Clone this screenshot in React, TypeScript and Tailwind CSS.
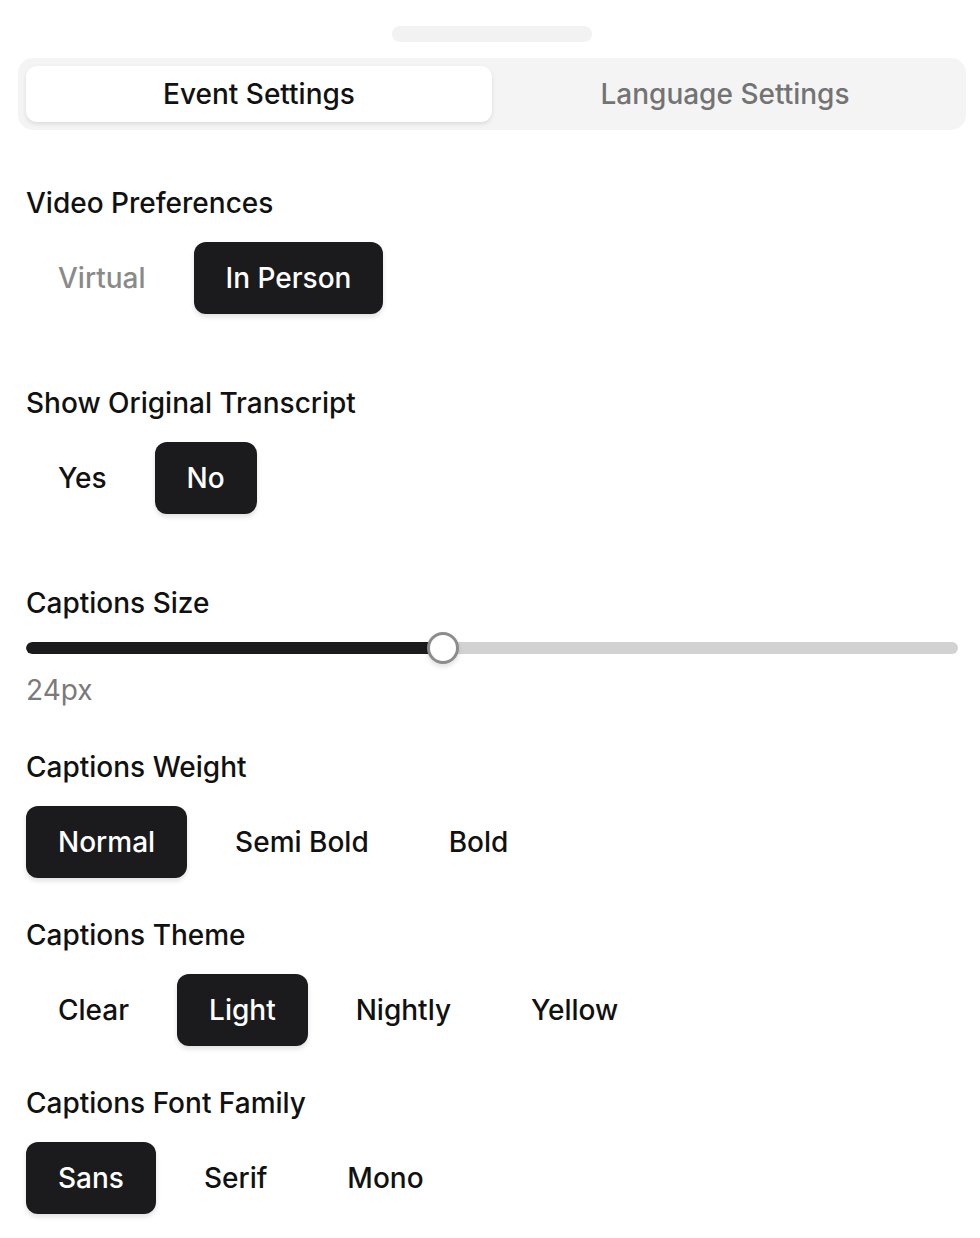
import { useState } from "react";

type Option = { value: string; label: string; disabled?: boolean };

function Segmented({
  options,
  value,
  onChange,
}: {
  options: Option[];
  value: string;
  onChange: (v: string) => void;
}) {
  return (
    <div className="flex items-center gap-4">
      {options.map((opt) => {
        const active = opt.value === value;
        return (
          <button
            key={opt.value}
            type="button"
            onClick={() => !opt.disabled && onChange(opt.value)}
            className={
              active
                ? "h-[72px] rounded-[12px] bg-[#1b1b1d] px-8 text-[28px] font-medium text-white shadow-[0_3px_5px_rgba(0,0,0,0.12)]"
                : opt.disabled
                  ? "h-[72px] rounded-[12px] px-8 text-[28px] font-medium text-[#8a8a8a]"
                  : "h-[72px] rounded-[12px] px-8 text-[28px] font-medium text-[#111111]"
            }
          >
            {opt.label}
          </button>
        );
      })}
    </div>
  );
}

function Label({ children }: { children: string }) {
  return (
    <p className="mb-[19px] h-10 text-[28px] font-medium leading-10 text-[#111111]">
      {children}
    </p>
  );
}

export default function App() {
  const [tab, setTab] = useState("event");
  const [video, setVideo] = useState("person");
  const [transcript, setTranscript] = useState("no");
  const [size] = useState(24);
  const [weight, setWeight] = useState("normal");
  const [theme, setTheme] = useState("light");
  const [family, setFamily] = useState("sans");

  const percent = 44.7;

  return (
    <div
      className="min-h-screen bg-white pb-6 pl-[18px] pr-[14px] pt-[26px]"
      style={{ fontFamily: "Inter, 'Noto Sans', sans-serif" }}
    >
      <div className="mx-auto h-4 w-[200px] rounded-full bg-[#f2f2f2]" />

      <div className="mt-4 flex h-[72px] rounded-[15px] bg-[#f4f4f4] p-2">
        <button
          type="button"
          onClick={() => setTab("event")}
          className={
            tab === "event"
              ? "flex-1 rounded-[11px] bg-white text-[28px] font-medium text-[#111111] shadow-[0_2px_4px_rgba(0,0,0,0.1)]"
              : "flex-1 rounded-[11px] text-[28px] font-medium text-[#737373]"
          }
        >
          Event Settings
        </button>
        <button
          type="button"
          onClick={() => setTab("language")}
          className={
            tab === "language"
              ? "flex-1 rounded-[11px] bg-white text-[28px] font-medium text-[#111111] shadow-[0_2px_4px_rgba(0,0,0,0.1)]"
              : "flex-1 rounded-[11px] text-[28px] font-medium text-[#737373]"
          }
        >
          Language Settings
        </button>
      </div>

      <div className="px-2 pt-[53px]">
        <section>
          <Label>Video Preferences</Label>
          <Segmented
            options={[
              { value: "virtual", label: "Virtual", disabled: true },
              { value: "person", label: "In Person" },
            ]}
            value={video}
            onChange={setVideo}
          />
        </section>

        <section className="mt-[69px]">
          <Label>Show Original Transcript</Label>
          <Segmented
            options={[
              { value: "yes", label: "Yes" },
              { value: "no", label: "No" },
            ]}
            value={transcript}
            onChange={setTranscript}
          />
        </section>

        <section className="mt-[69px]">
          <p className="h-10 text-[28px] font-medium leading-10 text-[#111111]">
            Captions Size
          </p>
          <div className="relative mt-[9px] flex h-8 items-center">
            <div className="h-3 w-full overflow-hidden rounded-full bg-[#d2d2d2]">
              <div
                className="h-full rounded-full bg-[#1b1b1d]"
                style={{ width: `${percent}%` }}
              />
            </div>
            <div
              className="absolute top-0 h-8 w-8 -translate-x-1/2 rounded-full border-[3px] border-[#8c8c8c] bg-white shadow-[0_3px_5px_rgba(0,0,0,0.12)]"
              style={{ left: `${percent}%` }}
            />
          </div>
          <p className="mt-[6px] h-10 text-[28px] leading-10 text-[#7a7a7a]">
            {size}px
          </p>
        </section>

        <section className="mt-[37px]">
          <Label>Captions Weight</Label>
          <Segmented
            options={[
              { value: "normal", label: "Normal" },
              { value: "semibold", label: "Semi Bold" },
              { value: "bold", label: "Bold" },
            ]}
            value={weight}
            onChange={setWeight}
          />
        </section>

        <section className="mt-[37px]">
          <Label>Captions Theme</Label>
          <Segmented
            options={[
              { value: "clear", label: "Clear" },
              { value: "light", label: "Light" },
              { value: "nightly", label: "Nightly" },
              { value: "yellow", label: "Yellow" },
            ]}
            value={theme}
            onChange={setTheme}
          />
        </section>

        <section className="mt-[37px]">
          <Label>Captions Font Family</Label>
          <Segmented
            options={[
              { value: "sans", label: "Sans" },
              { value: "serif", label: "Serif" },
              { value: "mono", label: "Mono" },
            ]}
            value={family}
            onChange={setFamily}
          />
        </section>
      </div>
    </div>
  );
}
